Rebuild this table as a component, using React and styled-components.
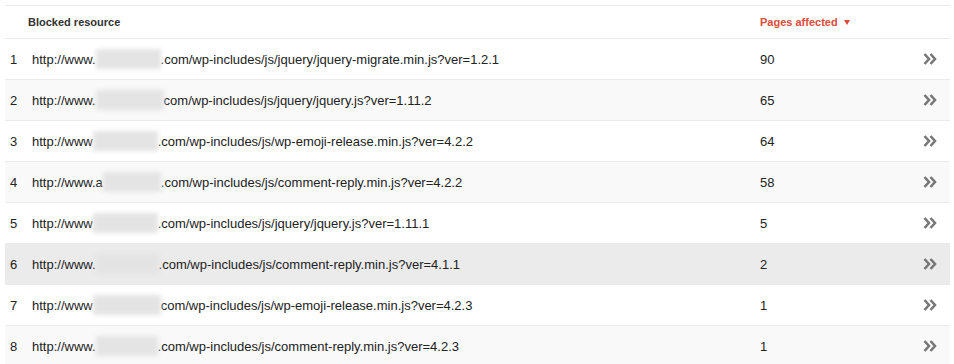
import styled, { createGlobalStyle } from 'styled-components';

const GlobalStyle = createGlobalStyle`
    body {
        margin: 0;
        background: #fff;
        font-family: "Liberation Sans", Arial, sans-serif;
    }
`;

const rows = [
    { id: 1, pre: 'http://www.', blur: 65, post: '.com/wp-includes/js/jquery/jquery-migrate.min.js?ver=1.2.1', pages: 90 },
    { id: 2, pre: 'http://www.', blur: 68, post: 'com/wp-includes/js/jquery/jquery.js?ver=1.11.2', pages: 65 },
    { id: 3, pre: 'http://www', blur: 65, post: '.com/wp-includes/js/wp-emoji-release.min.js?ver=4.2.2', pages: 64 },
    { id: 4, pre: 'http://www.a', blur: 58, post: '.com/wp-includes/js/comment-reply.min.js?ver=4.2.2', pages: 58 },
    { id: 5, pre: 'http://www', blur: 65, post: '.com/wp-includes/js/jquery/jquery.js?ver=1.11.1', pages: 5 },
    { id: 6, pre: 'http://www.', blur: 63, post: '.com/wp-includes/js/comment-reply.min.js?ver=4.1.1', pages: 2, hover: true },
    { id: 7, pre: 'http://www', blur: 68, post: 'com/wp-includes/js/wp-emoji-release.min.js?ver=4.2.3', pages: 1 },
    { id: 8, pre: 'http://www.', blur: 62, post: '.com/wp-includes/js/comment-reply.min.js?ver=4.2.3', pages: 1 },
];

const Table = styled.div`
    margin: 5px 4px 0 5px;
    border-top: 1px solid #ebebeb;
`;

const HeaderRow = styled.div`
    display: grid;
    grid-template-columns: 23px 732px 1fr 60px;
    align-items: center;
    height: 32px;
    border-bottom: 1px solid #ebebeb;
    font-size: 11px;
    font-weight: bold;
    color: #333;
`;

const SortHeader = styled.div`
    color: #dd4b39;
    display: flex;
    align-items: center;
    gap: 6px;
`;

// small downward triangle next to the sorted column
const SortArrow = styled.span`
    width: 0;
    height: 0;
    margin-top: 1px;
    border-left: 3px solid transparent;
    border-right: 3px solid transparent;
    border-top: 5px solid #dd4b39;
`;

const Row = styled.div`
    display: grid;
    grid-template-columns: 27px 728px 1fr 60px;
    align-items: center;
    height: 40px;
    border-bottom: 1px solid #ebebeb;
    font-size: 13px;
    color: #222;
    background: ${(p) => (p.$hover ? '#ebebeb' : p.$odd ? '#fff' : '#f9f9f9')};
`;

const Index = styled.div`
    padding-left: 5px;
`;

const Url = styled.div`
    display: flex;
    align-items: center;
    white-space: nowrap;
`;

const Blur = styled.span`
    display: inline-block;
    width: ${(p) => p.$w}px;
    height: 20px;
    background: #e4e4e4;
    filter: blur(2px);
`;

const Open = styled.div`
    display: flex;
    justify-content: flex-end;
    padding-right: 13px;
`;

const Chevrons = () => (
    <svg width="14" height="12" viewBox="0 0 14 12">
        <g fill="none" stroke="#777" strokeWidth="2.6" strokeLinejoin="miter">
            <polyline points="1.5,1 6,6 1.5,11" />
            <polyline points="7.5,1 12,6 7.5,11" />
        </g>
    </svg>
);

export default function App() {
    return (
        <>
            <GlobalStyle />
            <Table>
                <HeaderRow>
                    <span />
                    <span>Blocked resource</span>
                    <SortHeader>
                        Pages affected
                        <SortArrow />
                    </SortHeader>
                    <span />
                </HeaderRow>
                {rows.map((row) => (
                    <Row key={row.id} $odd={row.id % 2 === 1} $hover={row.hover}>
                        <Index>{row.id}</Index>
                        <Url>
                            {row.pre}
                            <Blur $w={row.blur} />
                            {row.post}
                        </Url>
                        <div>{row.pages}</div>
                        <Open>
                            <Chevrons />
                        </Open>
                    </Row>
                ))}
            </Table>
        </>
    );
}
